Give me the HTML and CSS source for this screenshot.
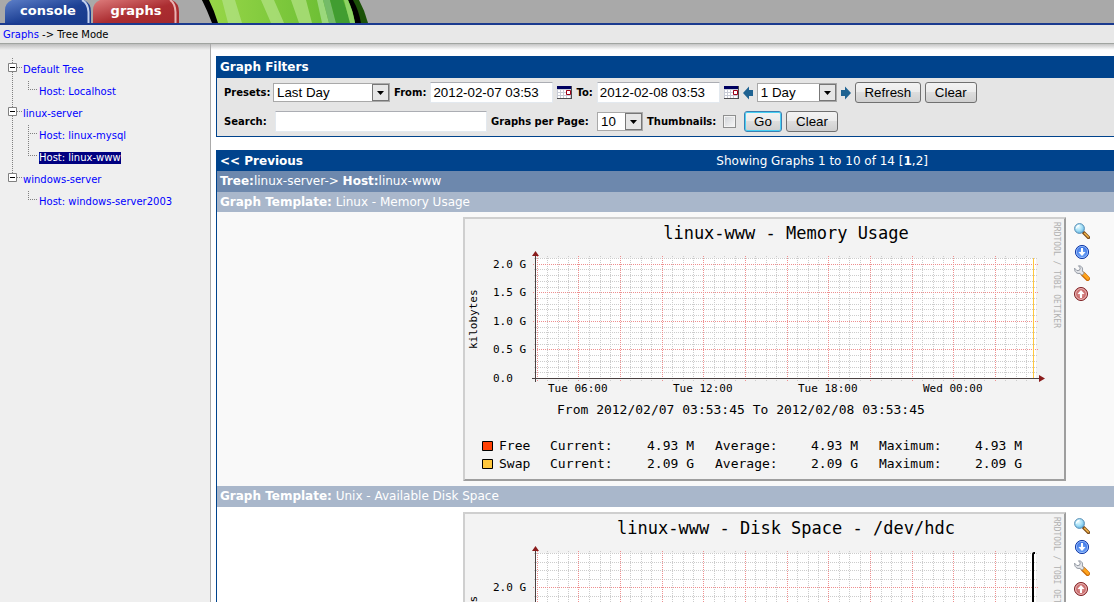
FILE: index.html
```
<!DOCTYPE html>
<html lang="en">
<head>
<meta charset="utf-8">
<title>Graphs - Tree Mode</title>
<link rel="stylesheet" href="styles.css">
</head>
<body>
<svg class="defs" aria-hidden="true">
  <defs>
    <linearGradient id="leaf" x1="0" x2="1" y1="0" y2="0">
      <stop offset="0" stop-color="#97d647"/><stop offset="1" stop-color="#62b930"/>
    </linearGradient>
    <linearGradient id="blue-tab" x1="0" x2="1" y1="0" y2="1">
      <stop offset="0" stop-color="#5d7fc8"/><stop offset=".55" stop-color="#1d4094"/><stop offset="1" stop-color="#173a8c"/>
    </linearGradient>
    <linearGradient id="red-tab" x1="0" x2="1" y1="0" y2="1">
      <stop offset="0" stop-color="#dd7c7c"/><stop offset=".55" stop-color="#ab2d31"/><stop offset="1" stop-color="#a3282c"/>
    </linearGradient>
    <radialGradient id="lens" cx=".4" cy=".35" r=".65">
      <stop offset="0" stop-color="#e4fbff"/><stop offset=".6" stop-color="#9fdcf5"/><stop offset="1" stop-color="#62b4e2"/>
    </radialGradient>
    <radialGradient id="blue-ball" cx=".5" cy=".6" r=".6">
      <stop offset="0" stop-color="#7db4ff"/><stop offset="1" stop-color="#2b62dc"/>
    </radialGradient>
    <radialGradient id="red-ball" cx=".5" cy=".5" r=".55">
      <stop offset="0" stop-color="#e0a0a0"/><stop offset="1" stop-color="#bb4a4a"/>
    </radialGradient>
    <symbol id="calendar" viewBox="0 0 15 13">
      <path fill="#c9ccd6" d="M0 0h15v13H0z"/>
      <path fill="#fff" d="M1 4h2v2H1zM4 4h2v2H4zM7 4h2v2H7zM1 7h2v2H1zM4 7h2v2H4zM7 7h2v2H7zM1 10h2v2H1zM4 10h2v2H4zM7 10h2v2H7zM10 10h3v2h-3z"/>
      <path fill="#000060" d="M0 0h14v3H0z"/>
      <path fill="#222" d="M14 0h1v13h-1zM0 12h15v1H0z" opacity=".75"/>
      <path fill="#fff" d="M10 5h3v4h-3z"/>
      <path fill="none" stroke="#a00018" d="M9.500 4.500h4v4h-4z"/>
    </symbol>
    <symbol id="magnifier" viewBox="0 0 16 16">
      <path d="M9.500 9.500l5 5" stroke="#7b4b1a" stroke-width="3.200" stroke-linecap="round"/>
      <path d="M10.500 10.200l3.800 3.800" stroke="#f2b64b" stroke-width="1.500" stroke-linecap="round"/>
      <circle cx="5.500" cy="5.500" r="4.900" fill="url(#lens)" stroke="#5c8fb4"/>
      <path d="M2.500 5.500a3 3 0 0 1 3-3" fill="none" stroke="#fff" stroke-width="1.300"/>
    </symbol>
    <symbol id="download" viewBox="0 0 16 16">
      <circle cx="8" cy="8" r="6.600" fill="url(#blue-ball)" stroke="#173da6"/>
      <circle cx="8" cy="8" r="5.600" fill="none" stroke="#a9cbff" stroke-width=".8"/>
      <path fill="#fff" d="M7 4h2v4h2.500L8 12 4.500 8H7z"/>
    </symbol>
    <symbol id="wrench" viewBox="0 0 16 16">
      <path d="M9 9l4.600 4.600" stroke="#c96a08" stroke-width="4.800" stroke-linecap="round"/>
      <path d="M9.300 8.800l4.500 4.500" stroke="#ffa41c" stroke-width="3" stroke-linecap="round"/>
      <path d="M.6 3.200C.2 7 3.200 9.200 6 8.300l2 2 2.300-2.300-2-2C9.300 3 7.500.6 4.500.8L6.300 3 5.500 5.200 3 5.700z" fill="#e3e5e9" stroke="#878d99" stroke-width=".9" stroke-linejoin="round"/>
    </symbol>
    <symbol id="page-top" viewBox="0 0 16 16">
      <circle cx="7" cy="8" r="6.500" fill="url(#red-ball)" stroke="#7c2023"/>
      <circle cx="7" cy="8" r="5.400" fill="none" stroke="#f0cccc" stroke-width=".9"/>
      <path fill="#fff" d="M6 12h2V8h2.500L7 4 3.500 8H6z"/>
    </symbol>
    <g id="columns" transform="translate(.5 0)">
      <path class="grid-minor" d="M84 39V164M95 39V164M105 39V164M126 39V164M137 39V164M147 39V164M167 39V164M178 39V164M188 39V164M209 39V164M220 39V164M230 39V164M251 39V164M261 39V164M272 39V164M292 39V164M303 39V164M313 39V164M334 39V164M345 39V164M355 39V164M376 39V164M386 39V164M397 39V164M418 39V164M428 39V164M438 39V164M459 39V164M470 39V164M480 39V164M501 39V164M511 39V164M521 39V164M542 39V164M553 39V164M563 39V164"/>
      <path class="grid-major" d="M74 39V165M115 39V165M157 39V165M199 39V165M240 39V165M282 39V165M324 39V165M365 39V165M407 39V165M449 39V165M490 39V165M532 39V165"/>
    </g>
    <g id="axes">
      <path d="M72.500 38V165M69 161.500H577" stroke="#4a4040" fill="none"/>
      <path d="M72.500 34l3.500 5h-7zM582 161.500l-6-3.500v7z" fill="#8a1c1c"/>
    </g>
  </defs>
</svg>

<header class="masthead">
  <nav class="tabs" aria-label="Sections">
    <a class="tab" href="#console">
      <svg class="tab-shape" viewBox="0 0 86 23" preserveAspectRatio="none"><path fill="url(#blue-tab)" d="M0 23V10Q0 3 7 0H79Q86 3 86 12V23z"/><path d="M77 0Q83 3 83.500 12V23" fill="none" stroke="#c3d0ee" stroke-width="2"/></svg>
      <span class="tab-text">console</span>
    </a>
    <a class="tab" href="#graphs">
      <svg class="tab-shape" viewBox="0 0 86 23" preserveAspectRatio="none"><path fill="url(#red-tab)" d="M0 23V10Q0 3 7 0H79Q86 3 86 12V23z"/><path d="M77 0Q82 3 82.500 12V23" fill="none" stroke="#e9b3b3" stroke-width="2"/></svg>
      <span class="tab-text">graphs</span>
    </a>
  </nav>
  <svg class="leaf" viewBox="0 0 168 23" width="168" height="23" aria-hidden="true">
    <path d="M1 0H158Q164 11 167 23H20z" fill="#1c5208"/>
    <path d="M1 0H152Q158 11 160 23H11Q6 10 1 0z" fill="#000"/>
    <path d="M8 0H147Q152 10 154 23H17Q13 10 8 0z" fill="url(#leaf)"/>
    <path d="M21 0H34L41 23H27zM60 0H73L83 23H70zM90 0H105L111 23H98z" fill="#b1e283" opacity=".75"/>
    <path d="M116 0H122L128 23H121z" fill="#9bd87c"/>
    <path d="M122 0H129L135 23H128z" fill="#74bb68"/>
    <path d="M129 0H142L150 23H135z" fill="#419d31"/>
    <path d="M143 0H147Q152 11 154 23H149z" fill="#8fd466"/>
  </svg>
</header>

<nav class="breadcrumb" aria-label="Breadcrumb"><a href="#graphs">Graphs</a> -&gt; Tree Mode</nav>

<div class="page">
  <aside class="sidebar">
    <ul class="tree">
      <li class="node"><button class="toggle" aria-label="Collapse Default Tree"><svg viewBox="0 0 23 22" width="23" height="22"><path class="dots" d="M12.500 0V22M17 9.500H22"/><path class="box" d="M8.500 5.500h8v8h-8z"/><path class="minus" d="M10 9.500h5"/></svg></button><a href="#t1">Default Tree</a></li>
      <li class="node"><svg class="branch" viewBox="0 0 39 22" width="39" height="22"><path class="dots" d="M12.500 0V22M28.500 1V9M28 9.500H38"/></svg><a href="#h1">Host: Localhost</a></li>
      <li class="node"><button class="toggle" aria-label="Collapse linux-server"><svg viewBox="0 0 23 22" width="23" height="22"><path class="dots" d="M12.500 0V22M17 9.500H22"/><path class="box" d="M8.500 5.500h8v8h-8z"/><path class="minus" d="M10 9.500h5"/></svg></button><a href="#t2">linux-server</a></li>
      <li class="node"><svg class="branch" viewBox="0 0 39 22" width="39" height="22"><path class="dots" d="M12.500 0V22M28.500 1V22M28 9.500H38"/></svg><a href="#h2">Host: linux-mysql</a></li>
      <li class="node"><svg class="branch" viewBox="0 0 39 22" width="39" height="22"><path class="dots" d="M12.500 0V22M28.500 1V9M28 9.500H38"/></svg><a class="selected" href="#h3" aria-current="page">Host: linux-www</a></li>
      <li class="node"><button class="toggle" aria-label="Collapse windows-server"><svg viewBox="0 0 23 22" width="23" height="22"><path class="dots" d="M12.500 0V9M17 9.500H22"/><path class="box" d="M8.500 5.500h8v8h-8z"/><path class="minus" d="M10 9.500h5"/></svg></button><a href="#t3">windows-server</a></li>
      <li class="node"><svg class="branch" viewBox="0 0 39 22" width="39" height="22"><path class="dots" d="M28.500 1V9M28 9.500H38"/></svg><a href="#h4">Host: windows-server2003</a></li>
    </ul>
  </aside>

  <main class="content">
    <section class="panel filters">
      <h2 class="panel-title">Graph Filters</h2>
      <form class="filter-row">
        <label class="lead" for="preset">Presets:</label>
        <select class="select preset" id="preset"><option>Last Day</option></select>
        <label for="from">From:</label>
        <input class="field date" id="from" type="text" value="2012-02-07 03:53">
        <button class="icon-button" type="button" aria-label="Pick start date"><svg width="15" height="13"><use href="#calendar"/></svg></button>
        <label for="to">To:</label>
        <input class="field date" id="to" type="text" value="2012-02-08 03:53">
        <button class="icon-button" type="button" aria-label="Pick end date"><svg width="15" height="13"><use href="#calendar"/></svg></button>
        <button class="icon-button" type="button" aria-label="Shift back"><svg viewBox="0 0 10 14" width="10" height="14"><path fill="#1f6392" d="M0 7l6-6.500V4h4v6H6v3.500z"/></svg></button>
        <select class="select span" aria-label="Time span"><option>1 Day</option></select>
        <button class="icon-button" type="button" aria-label="Shift forward"><svg viewBox="0 0 10 14" width="10" height="14"><path fill="#1f6392" d="M10 7L4 .5V4H0v6h4v3.500z"/></svg></button>
        <button class="button refresh" type="button">Refresh</button>
        <button class="button clear" type="button">Clear</button>
      </form>
      <form class="filter-row">
        <label class="lead" for="search">Search:</label>
        <input class="field search" id="search" type="text">
        <label class="per-page" for="per-page">Graphs per Page:</label>
        <select class="select count" id="per-page"><option>10</option></select>
        <label class="thumbs" for="thumbs">Thumbnails:</label>
        <input class="check" id="thumbs" type="checkbox">
        <button class="button go" type="button">Go</button>
        <button class="button clear" type="button">Clear</button>
      </form>
    </section>

    <section class="panel graphs">
      <div class="panel-title pager"><a href="#prev">&lt;&lt; Previous</a><span class="showing">Showing Graphs 1 to 10 of 14 [<strong>1</strong>,<a class="page-link" href="#2">2</a>]</span></div>
      <div class="bar path"><strong>Tree:</strong>linux-server-&gt; <strong>Host:</strong>linux-www</div>

      <h3 class="bar template"><strong>Graph Template:</strong> Linux - Memory Usage</h3>
      <div class="graph-row shaded">
        <svg class="graph" viewBox="0 0 603 264" width="603" height="264" role="img" aria-label="linux-www - Memory Usage">
          <path fill="#f3f3f3" d="M0 0h603v264H0z"/>
          <path fill="#cfcfcf" d="M0 0h603l-2 2H2v260l-2 2z"/>
          <path fill="#9e9e9e" d="M603 0v264H0l2-2h599V2z"/>
          <path fill="#fff" d="M73 41h500v120H73z"/>
          <path class="grid-minor" d="M71 41.500H575M71 52.500H575M71 58.500H575M71 64.500H575M71 70.500H575M71 81.500H575M71 87.500H575M71 92.500H575M71 98.500H575M71 110.500H575M71 115.500H575M71 121.500H575M71 127.500H575M71 138.500H575M71 144.500H575M71 150.500H575M71 155.500H575"/>
          <use href="#columns"/>
          <path class="grid-major" d="M70 47.500H575M70 75.500H575M70 104.500H575M70 132.500H575"/>
          <path d="M570.500 41V161" stroke="#ffc73c"/>
          <use href="#axes"/>
          <text class="graph-title" x="323" y="22">linux-www - Memory Usage</text>
          <g class="tick">
            <text x="30" y="51">2.0 G</text><text x="30" y="79">1.5 G</text><text x="30" y="108">1.0 G</text><text x="30" y="136">0.5 G</text><text x="30" y="165">0.0</text>
            <text x="85" y="175">Tue 06:00</text><text x="210" y="175">Tue 12:00</text><text x="335" y="175">Tue 18:00</text><text x="460" y="175">Wed 00:00</text>
          </g>
          <text class="unit" transform="translate(14 132) rotate(-90)">kilobytes</text>
          <text class="mark" transform="translate(591 5) rotate(90)">RRDTOOL / TOBI OETIKER</text>
          <g class="legend">
            <text x="94" y="197">From 2012/02/07 03:53:45 To 2012/02/08 03:53:45</text>
            <path fill="#ff4105" stroke="#000" d="M19.500 224.500h10v9h-10z"/>
            <text x="36" y="233">Free</text><text x="87" y="233">Current:</text><text x="184" y="233">4.93 M</text><text x="252" y="233">Average:</text><text x="348" y="233">4.93 M</text><text x="416" y="233">Maximum:</text><text x="512" y="233">4.93 M</text>
            <path fill="#ffc73c" stroke="#000" d="M19.500 242.500h10v9h-10z"/>
            <text x="36" y="251">Swap</text><text x="87" y="251">Current:</text><text x="184" y="251">2.09 G</text><text x="252" y="251">Average:</text><text x="348" y="251">2.09 G</text><text x="416" y="251">Maximum:</text><text x="512" y="251">2.09 G</text>
          </g>
        </svg>
        <div class="actions">
          <a href="#zoom1" aria-label="Zoom graph"><svg width="16" height="16"><use href="#magnifier"/></svg></a>
          <a href="#csv1" aria-label="Export as CSV"><svg width="16" height="16"><use href="#download"/></svg></a>
          <a href="#edit1" aria-label="Graph properties"><svg width="16" height="16"><use href="#wrench"/></svg></a>
          <a href="#top1" aria-label="Page top"><svg width="16" height="16"><use href="#page-top"/></svg></a>
        </div>
      </div>

      <h3 class="bar template"><strong>Graph Template:</strong> Unix - Available Disk Space</h3>
      <div class="graph-row">
        <svg class="graph" viewBox="0 0 603 264" width="603" height="264" role="img" aria-label="linux-www - Disk Space - /dev/hdc">
          <path fill="#f3f3f3" d="M0 0h603v264H0z"/>
          <path fill="#cfcfcf" d="M0 0h603l-2 2H2v260l-2 2z"/>
          <path fill="#9e9e9e" d="M603 0v264H0l2-2h599V2z"/>
          <path fill="#fff" d="M73 41h500v120H73z"/>
          <path class="grid-minor" d="M71 41.500H575M71 50.500H575M71 58.500H575M71 67.500H575M71 84.500H575M71 92.500H575M71 101.500H575M71 109.500H575"/>
          <use href="#columns"/>
          <path class="grid-major" d="M70 75.500H575M70 118.500H575"/>
          <path d="M572 41H571Q570 41 570 43V161" fill="none" stroke="#000" stroke-width="2"/>
          <use href="#axes"/>
          <text class="graph-title" x="323" y="22">linux-www - Disk Space - /dev/hdc</text>
          <g class="tick"><text x="30" y="79">2.0 G</text></g>
          <text class="unit" transform="translate(14 117) rotate(-90)">bytes</text>
          <text class="mark" transform="translate(591 5) rotate(90)">RRDTOOL / TOBI OETIKER</text>
        </svg>
        <div class="actions">
          <a href="#zoom2" aria-label="Zoom graph"><svg width="16" height="16"><use href="#magnifier"/></svg></a>
          <a href="#csv2" aria-label="Export as CSV"><svg width="16" height="16"><use href="#download"/></svg></a>
          <a href="#edit2" aria-label="Graph properties"><svg width="16" height="16"><use href="#wrench"/></svg></a>
          <a href="#top2" aria-label="Page top"><svg width="16" height="16"><use href="#page-top"/></svg></a>
        </div>
      </div>
    </section>
  </main>
</div>
</body>
</html>
```
FILE: styles.css
```
* { box-sizing: border-box; }

body {
  margin: 0;
  height: 100vh;
  display: flex;
  flex-direction: column;
  overflow: hidden;
  background: #fff;
  color: #000;
  font: 10px/14px Verdana, "DejaVu Sans", sans-serif;
}

a { color: #0000ff; text-decoration: none; }
svg { display: block; flex: none; }
h2, h3, ul { margin: 0; padding: 0; }
.defs { width: 0; height: 0; }

.masthead {
  display: flex;
  gap: 22px;
  height: 25px;
  flex: none;
  padding-left: 5px;
  background: #a9a9a9;
  border-bottom: 2px solid #1a3a8f;
}
.tabs { display: flex; gap: 2px; }
.tab { display: grid; width: 86px; height: 23px; }
.tab > * { grid-area: 1 / 1; }
.tab-shape { width: 100%; height: 23px; }
.tab-text { color: #fff; font-size: 13px; line-height: 21px; font-weight: bold; text-align: center; }

.breadcrumb {
  flex: none;
  height: 19px;
  padding: 3px;
  background: #e8e8e8;
  border-bottom: 1px solid #a0a4a0;
}

.page {
  flex: 1;
  min-height: 0;
  display: flex;
}
.sidebar {
  width: 211px;
  flex: none;
  padding-top: 14px;
  background: linear-gradient(#bdbdbd, #efefef 6px);
  border-right: 1px solid #aaa;
}
.tree { list-style: none; }
.node { display: flex; align-items: center; height: 22px; }
.node a { margin-top: 2px; line-height: 12px; white-space: nowrap; }
.node .selected { background: #000080; color: #fff; }
.toggle, .icon-button { display: block; flex: none; padding: 0; border: 0; background: none; }
.dots { fill: none; stroke: #808080; stroke-dasharray: 1 1; }
.box { fill: #fff; stroke: #808080; }
.minus { stroke: #000; }

.content {
  flex: 1;
  min-width: 0;
  overflow: hidden;
  padding: 12px 0 0 5px;
  background: linear-gradient(#c4c4c4, #fff 6px);
}
.panel { border-left: 1px solid #00438c; }
.panel-title {
  background: #00438c;
  color: #fff;
  font-size: 12px;
  font-weight: bold;
  line-height: 22px;
  padding: 0 3px;
}
.filters {
  background: #e5e5e5;
  border-bottom: 1px solid #00438c;
  margin-bottom: 13px;
}
.filter-row {
  display: flex;
  align-items: center;
  gap: 4px;
  height: 29px;
  padding-left: 7px;
}
.filter-row label { font-weight: bold; white-space: nowrap; }
.filter-row .lead { width: 45px; }
.filter-row .per-page { width: 102px; }
.filter-row .thumbs { width: 72px; }

.field, .select, .button { font-family: Arial, "Liberation Sans", sans-serif; color: #000; }
.field {
  height: 21px;
  padding: 0 2px;
  border: 1px solid #e3e9ef;
  border-top-color: #abadb3;
  background: #fff;
}
.date { width: 123px; }
.search { width: 212px; margin-left: 2px; }
.select {
  appearance: none;
  height: 19px;
  padding: 0 18px 0 3px;
  border: 1px solid #a9a9a9;
  border-radius: 0;
  background: #fff url("data:image/svg+xml,%3Csvg xmlns='http://www.w3.org/2000/svg' width='17' height='17'%3E%3Crect x='.5' y='.5' width='16' height='16' fill='%23e6e6e6' stroke='%23777'/%3E%3Cpath d='M5 7h7l-3.500 4z'/%3E%3C/svg%3E") right center no-repeat;
}
.preset { width: 117px; }
.span { width: 80px; }
.count { width: 46px; }
.check { appearance: none; width: 13px; height: 13px; margin: 0 4px 0 0; border: 1px solid #8e8f8f; background: linear-gradient(135deg, #cfd2d6, #f8f8f8); box-shadow: inset 0 0 0 1px #f4f4f4; }
.button {
  height: 21px;
  padding: 0;
  border: 1px solid #707070;
  border-radius: 3px;
  background: linear-gradient(#f3f3f3, #ebebeb 50%, #dddddd 50%, #cfcfcf);
}
.refresh { width: 66px; }
.clear { width: 52px; }
.go { width: 38px; border-color: #3c7fb1; box-shadow: inset 0 0 0 1px #48d0f4; }

.pager { display: flex; justify-content: space-between; line-height: 20px; padding: 1px 186px 0 3px; }
.pager a { color: #fff; }
.showing { font-weight: normal; }
.bar { color: #fff; font-size: 12px; font-weight: normal; line-height: 21px; padding: 0 3px; }
.path { background: #6d88ad; }
.template { height: 20px; line-height: 20px; background: #a9b7cb; }
.graph-row {
  display: flex;
  justify-content: flex-end;
  gap: 8px;
  padding: 5px 24px 5px 0;
}
.shaded { background: #f9f9f9; }
.graph-row + .template { height: 21px; }
.actions { display: flex; flex-direction: column; gap: 5px; padding-top: 6px; }

.graph text { font-family: "DejaVu Sans Mono", monospace; fill: #000; }
.graph .graph-title { font-size: 17px; text-anchor: middle; }
.graph .tick text, .graph .unit { font-size: 11px; }
.graph .mark { font-size: 8px; fill: #b0b0b0; }
.graph .legend text { font-size: 13px; }
.grid-minor, .grid-major { fill: none; stroke-dasharray: 1 1; }
.grid-minor { stroke: #cccccc; }
.grid-major { stroke: #ee8f8f; }
```
